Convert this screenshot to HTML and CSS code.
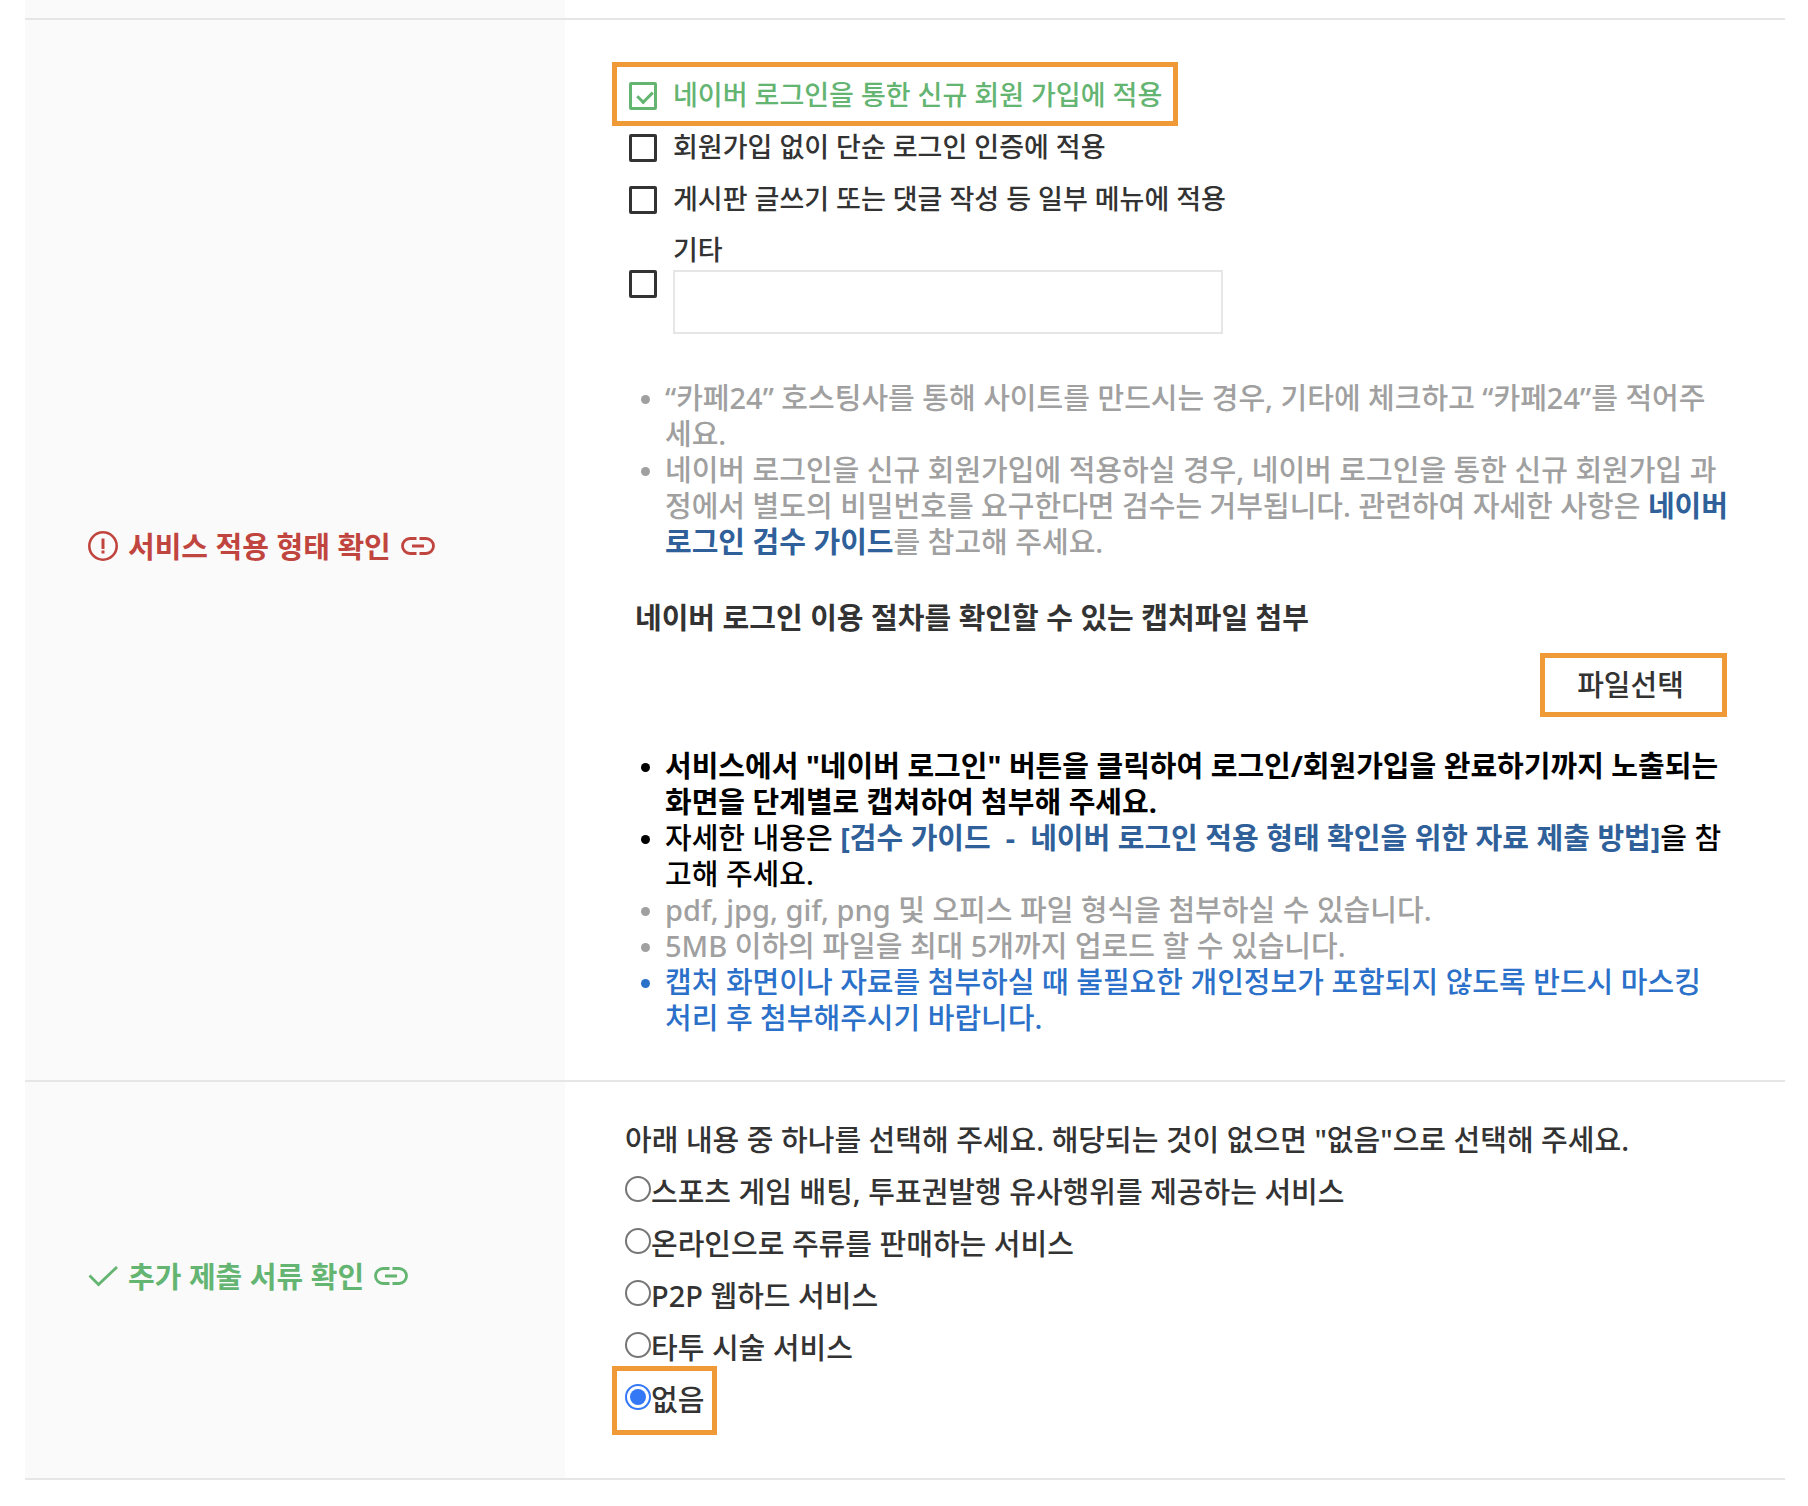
FILE: index.html
```html
<!DOCTYPE html>
<html lang="ko">
<head>
<meta charset="UTF-8" />
<meta name="viewport" content="width=device-width, initial-scale=1" />
<title>네이버 로그인 검수 요청</title>
<link rel="stylesheet" href="styles.css">
</head>
<body>

<form class="review-form">
  <div class="row row-prev">
    <div class="row-title"></div>
    <div class="row-body"></div>
  </div>

  <section class="row">
    <div class="row-title error">
      <svg class="icon-state" viewBox="0 0 30 30" aria-hidden="true">
        <circle cx="15" cy="15" r="13.7" fill="none" stroke="currentColor" stroke-width="2.6"/>
        <path d="M15 7.500V18M15 19.500V22.500" fill="none" stroke="currentColor" stroke-width="3"/>
      </svg>
      <h2>서비스 적용 형태 확인</h2>
      <a href="#service-type" aria-label="링크">
        <svg class="icon-link" viewBox="0 0 34 18" aria-hidden="true">
          <path d="M15.500 1.500H9a7.500 7.500 0 0 0 0 15h6.500M18.500 1.500H25a7.500 7.500 0 0 1 0 15h-6.500M11 9h12" fill="none" stroke="currentColor" stroke-width="2.8"/>
        </svg>
      </a>
    </div>

    <div class="row-body" id="service-type">
      <ul class="checks">
        <li>
          <label class="marked on">
            <input type="checkbox" name="apply" value="join" checked />
            네이버 로그인을 통한 신규 회원 가입에 적용
          </label>
        </li>
        <li>
          <label>
            <input type="checkbox" name="apply" value="auth" />
            회원가입 없이 단순 로그인 인증에 적용
          </label>
        </li>
        <li>
          <label>
            <input type="checkbox" name="apply" value="menu" />
            게시판 글쓰기 또는 댓글 작성 등 일부 메뉴에 적용
          </label>
        </li>
        <li class="etc">
          <input type="checkbox" name="apply" value="etc" id="etc" />
          <div class="etc-field">
            <label for="etc">기타</label>
            <input type="text" name="etcText" aria-label="기타 내용" />
          </div>
        </li>
      </ul>

      <ul class="notes">
        <li>“카페24” 호스팅사를 통해 사이트를 만드시는 경우, 기타에 체크하고 “카페24”를 적어주세요.</li>
        <li>네이버 로그인을 신규 회원가입에 적용하실 경우, 네이버 로그인을 통한 신규 회원가입 과정에서 별도의 비밀번호를 요구한다면 검수는 거부됩니다. 관련하여 자세한 사항은 <a href="#guide">네이버 로그인 검수 가이드</a>를 참고해 주세요.</li>
      </ul>

      <h3>네이버 로그인 이용 절차를 확인할 수 있는 캡처파일 첨부</h3>
      <div class="upload">
        <button type="button">파일선택</button>
      </div>

      <ul class="notes">
        <li class="strong">서비스에서 "네이버 로그인" 버튼을 클릭하여 로그인/회원가입을 완료하기까지 노출되는 화면을 단계별로 캡쳐하여 첨부해 주세요.</li>
        <li class="dark">자세한 내용은 <a href="#guide-files">[검수 가이드&nbsp; - &nbsp;네이버 로그인 적용 형태 확인을 위한 자료 제출 방법]</a>을 참고해 주세요.</li>
        <li>pdf, jpg, gif, png 및 오피스 파일 형식을 첨부하실 수 있습니다.</li>
        <li>5MB 이하의 파일을 최대 5개까지 업로드 할 수 있습니다.</li>
        <li class="info">캡처 화면이나 자료를 첨부하실 때 불필요한 개인정보가 포함되지 않도록 반드시 마스킹 처리 후 첨부해주시기 바랍니다.</li>
      </ul>
    </div>
  </section>

  <section class="row">
    <div class="row-title done">
      <svg class="icon-state" viewBox="0 0 30 30" aria-hidden="true">
        <path d="M1.500 14.500L10.500 23.500L29 6" fill="none" stroke="currentColor" stroke-width="2.800"/>
      </svg>
      <h2>추가 제출 서류 확인</h2>
      <a href="#extra-docs" aria-label="링크">
        <svg class="icon-link" viewBox="0 0 34 18" aria-hidden="true">
          <path d="M15.500 1.500H9a7.500 7.500 0 0 0 0 15h6.500M18.500 1.500H25a7.500 7.500 0 0 1 0 15h-6.500M11 9h12" fill="none" stroke="currentColor" stroke-width="2.8"/>
        </svg>
      </a>
    </div>

    <div class="row-body extra" id="extra-docs">
      <p>아래 내용 중 하나를 선택해 주세요. 해당되는 것이 없으면 "없음"으로 선택해 주세요.</p>
      <ul class="radios">
        <li><label><input type="radio" name="docs" value="sports" />스포츠 게임 배팅, 투표권발행 유사행위를 제공하는 서비스</label></li>
        <li><label><input type="radio" name="docs" value="alcohol" />온라인으로 주류를 판매하는 서비스</label></li>
        <li><label><input type="radio" name="docs" value="p2p" />P2P 웹하드 서비스</label></li>
        <li><label><input type="radio" name="docs" value="tattoo" />타투 시술 서비스</label></li>
        <li><label class="marked"><input type="radio" name="docs" value="none" checked />없음</label></li>
      </ul>
    </div>
  </section>
</form>

</body>
</html>
```
FILE: styles.css
```css
* {
  box-sizing: border-box;
}
body {
  margin: 0;
  background: #fff;
  color: #333;
  font-family: "Noto Sans", "Noto Sans CJK KR", sans-serif;
  font-size: 29px;
  font-weight: 500;
  line-height: 36px;
}
ul, h2, h3, p {
  margin: 0;
  padding: 0;
}
ul {
  list-style: none;
}
a {
  color: #2f6099;
  font-weight: bold;
  text-decoration: none;
}

/* form rows */
.review-form {
  margin: 0 23px 0 25px;
}
.row {
  display: grid;
  grid-template-columns: 540px 1fr;
  border-bottom: 2px solid #e6e6e6;
}
.row-prev {
  height: 20px;
}
.row-title {
  display: flex;
  align-items: center;
  padding: 0 20px 8px 63px;
  background: #fafafa;
}
.row-title h2 {
  margin: 2px 10px 0;
  font-size: 29px;
}
.row-title a {
  display: flex;
  color: inherit;
}
.error {
  color: #c1453f;
}
.done {
  color: #64b472;
}
.icon-state {
  width: 30px;
  height: 30px;
}
.icon-link {
  width: 34px;
  height: 18px;
}
.row-body {
  padding: 0 54px 0 60px;
}
section .row-body {
  padding-top: 48px;
  padding-bottom: 44px;
}

/* orange frame round the choices to make */
.marked {
  position: relative;
}
.marked::after {
  content: "";
  position: absolute;
  inset: -6px -16px -6px -17px;
  border: 5px solid #f09a37;
  pointer-events: none;
}

/* check boxes */
.checks {
  padding-left: 4px;
  font-size: 27px;
  line-height: 32px;
}
.checks label {
  display: inline-flex;
  align-items: center;
  gap: 16px;
  padding: 11px 0 9px;
}
.checks li {
  display: flex;
}
.checks .on {
  color: #64b472;
}
input[type="checkbox"] {
  appearance: none;
  position: relative;
  width: 28px;
  height: 28px;
  margin: 0;
  border: 3px solid #333;
  border-radius: 2px;
}
.checks label input[type="checkbox"] {
  margin-top: 2px;
}
input[type="checkbox"]:checked {
  border-color: #64b472;
}
input[type="checkbox"]:checked::after {
  content: "";
  position: absolute;
  left: 8px;
  top: 3px;
  width: 7px;
  height: 12px;
  border: solid #64b472;
  border-width: 0 3px 3px 0;
  transform: rotate(45deg);
}
.checks .etc {
  align-items: center;
  gap: 16px;
  padding-top: 10px;
}
.etc-field {
  display: flex;
  flex-direction: column;
  gap: 4px;
  width: 550px;
}
.checks .etc-field label {
  padding: 0;
}
.etc-field input {
  height: 64px;
  padding: 0 16px;
  border: 2px solid #e6e6e6;
  font: inherit;
}

/* notes */
.notes {
  padding-left: 40px;
  color: #a0a0a0;
}
.checks + .notes {
  margin-top: 46px;
}
.notes li {
  position: relative;
}
.notes li::before {
  content: "";
  position: absolute;
  left: -24px;
  top: 15px;
  width: 9px;
  height: 9px;
  border-radius: 50%;
  background: currentColor;
}
.notes .strong {
  color: #000;
  font-weight: bold;
}
.notes .dark {
  color: #000;
}
.notes .info {
  color: #2b70c9;
}

/* file upload */
h3 {
  margin: 40px 0 17px 10px;
  font-size: 29px;
}
.upload {
  display: flex;
  justify-content: flex-end;
  margin: 0 4px 31px 0;
}
.upload button {
  width: 187px;
  height: 64px;
  padding: 0 6px 0 0;
  border: 5px solid #f09a37;
  background: #fff;
  color: #333;
  font: inherit;
}

/* radios */
section .extra {
  padding-top: 32px;
  padding-bottom: 52px;
  line-height: 52px;
}
.radios label {
  display: inline-flex;
  align-items: center;
}
.radios li {
  display: flex;
}
.radios .marked::after {
  inset: -8px -13px -9px;
}
input[type="radio"] {
  appearance: none;
  width: 26px;
  height: 26px;
  margin: 0 0 6px;
  border: 2px solid #767676;
  border-radius: 50%;
}
input[type="radio"]:checked {
  padding: 3px;
  border-color: #3478f6;
  background: #3478f6;
  background-clip: content-box;
}
```
